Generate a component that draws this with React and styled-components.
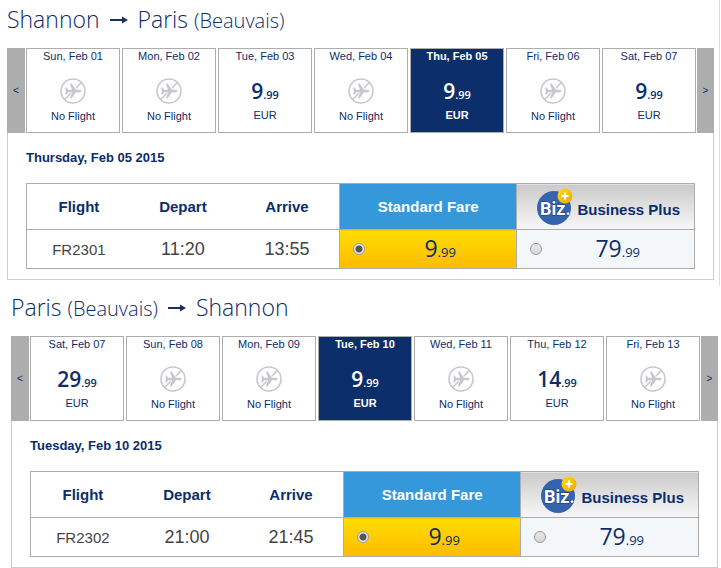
import React, { useState } from 'react';
import styled, { createGlobalStyle } from 'styled-components';

const trips = [
  {
    id: 'outbound',
    from: 'Shannon',
    to: 'Paris',
    toAirport: '(Beauvais)',
    date: 'Thursday, Feb 05 2015',
    selected: 4,
    days: [
      { label: 'Sun, Feb 01' },
      { label: 'Mon, Feb 02' },
      { label: 'Tue, Feb 03', price: '9.99' },
      { label: 'Wed, Feb 04' },
      { label: 'Thu, Feb 05', price: '9.99' },
      { label: 'Fri, Feb 06' },
      { label: 'Sat, Feb 07', price: '9.99' },
    ],
    flight: {
      number: 'FR2301',
      depart: '11:20',
      arrive: '13:55',
      standard: '9.99',
      business: '79.99',
    },
  },
  {
    id: 'inbound',
    from: 'Paris',
    fromAirport: '(Beauvais)',
    to: 'Shannon',
    date: 'Tuesday, Feb 10 2015',
    selected: 3,
    days: [
      { label: 'Sat, Feb 07', price: '29.99' },
      { label: 'Sun, Feb 08' },
      { label: 'Mon, Feb 09' },
      { label: 'Tue, Feb 10', price: '9.99' },
      { label: 'Wed, Feb 11' },
      { label: 'Thu, Feb 12', price: '14.99' },
      { label: 'Fri, Feb 13' },
    ],
    flight: {
      number: 'FR2302',
      depart: '21:00',
      arrive: '21:45',
      standard: '9.99',
      business: '79.99',
    },
  },
];

const NoFlightIcon = () => (
  <svg width='26' height='26' viewBox='0 0 26 26' aria-hidden='true'>
    <circle cx='13' cy='13' r='12' fill='none' stroke='#c6c8cd' strokeWidth='1.6' />
    <path d='M4.5 21.5 21.5 4.5' stroke='#c6c8cd' strokeWidth='1.6' />
    <path
      d='M21.5 13c0-.9-.9-1.300-2-1.300h-3.400L11.500 5.500H9.900l2.100 6.200H8.300L6.500 9.500H5.200L6.100 13l-.9 3.500h1.300l1.800-2.200H12l-2.100 6.200h1.600l4.600-6.200h3.400c1.100 0 2-.4 2-1.300z'
      fill='#c6c8cd'
      stroke='#fff'
      strokeWidth='1.4'
      paintOrder='stroke'
    />
  </svg>
);

const ArrowIcon = () => (
  <svg width='18' height='10' viewBox='0 0 18 10' aria-hidden='true'>
    <path d='M0 5h12V2.500L18 6l-6 3.500V7H0z' fill='#1b2f66' />
  </svg>
);

const BizLogo = ({ id }) => (
  <svg width='38' height='38' viewBox='0 0 38 38' role='img' aria-label='Biz plus'>
    <defs>
      <linearGradient id={id} x1='0' y1='0' x2='1' y2='1'>
        <stop offset='0' stopColor='#ffd90f' />
        <stop offset='1' stopColor='#f2a900' />
      </linearGradient>
    </defs>
    <circle cx='18' cy='20' r='17' fill='#3563ae' />
    <text
      x='4'
      y='27'
      fontFamily='Roboto, sans-serif'
      fontSize='18'
      fontWeight='700'
      fill='#fff'
      stroke='#1c3c80'
      strokeWidth='1'
      paintOrder='stroke'
    >
      Biz.
    </text>
    <circle cx='29' cy='8' r='7.5' fill={`url(#${id})`} />
    <path d='M29 4.5v7M25.5 8h7' stroke='#fff' strokeWidth='2.2' />
  </svg>
);

const Price = ({ value, large }) => {
  const [whole, cents] = value.split('.');
  return (
    <Amount $large={large}>
      {whole}
      <small>.{cents}</small>
    </Amount>
  );
};

const Trip = ({ trip }) => {
  const [selected, setSelected] = useState(trip.selected);
  const [fare, setFare] = useState('standard');
  const { flight } = trip;

  return (
    <TripSection $framed={trip.id === 'outbound'}>
      <Route>
        <span>
          {trip.from} {trip.fromAirport && <small>{trip.fromAirport}</small>}
        </span>
        <ArrowIcon />
        <span>
          {trip.to} {trip.toAirport && <small>{trip.toAirport}</small>}
        </span>
      </Route>
      <Calendar>
        <Pager aria-label='Previous days'>&lt;</Pager>
        <Days>
          {trip.days.map((day, i) => (
            <Day
              key={day.label}
              $active={i === selected}
              aria-pressed={i === selected}
              onClick={() => setSelected(i)}
            >
              <DayLabel>{day.label}</DayLabel>
              {day.price ? <Price value={day.price} /> : <NoFlightIcon />}
              <DayNote $priced={!!day.price}>
                {day.price ? 'EUR' : 'No Flight'}
              </DayNote>
            </Day>
          ))}
        </Days>
        <Pager aria-label='Next days'>&gt;</Pager>
      </Calendar>
      <Details>
        <h3>{trip.date}</h3>
        <FlightTable>
          <colgroup>
            <Col $share={47} />
            <Col $share={47} />
            <Col $share={47} />
            <Col $share={80} />
            <Col $share={80} />
          </colgroup>
          <thead>
            <tr>
              <HeadCell>Flight</HeadCell>
              <HeadCell>Depart</HeadCell>
              <HeadCell>Arrive</HeadCell>
              <HeadCell $kind='standard'>Standard Fare</HeadCell>
              <HeadCell $kind='business'>
                <BizTitle>
                  <BizLogo id={`${trip.id}-plus`} />
                  <span>Business Plus</span>
                </BizTitle>
              </HeadCell>
            </tr>
          </thead>
          <tbody>
            <tr>
              <Cell>{flight.number}</Cell>
              <Cell $time>{flight.depart}</Cell>
              <Cell $time>{flight.arrive}</Cell>
              {['standard', 'business'].map((kind) => (
                <Cell key={kind} $kind={kind}>
                  <Fare>
                    <Radio
                      type='radio'
                      name={`${trip.id}-fare`}
                      checked={fare === kind}
                      onChange={() => setFare(kind)}
                    />
                    <Price value={flight[kind]} large />
                  </Fare>
                </Cell>
              ))}
            </tr>
          </tbody>
        </FlightTable>
      </Details>
    </TripSection>
  );
};

const App = () => {
  return (
    <>
      <GlobalStyle />
      <Page>
        {trips.map((trip) => (
          <Trip key={trip.id} trip={trip} />
        ))}
      </Page>
    </>
  );
};

export default App;

const GlobalStyle = createGlobalStyle`
  * {
    box-sizing: border-box;
    margin: 0;
    padding: 0;
  }
  body {
    background: #fff;
    color: #0c2d6b;
    font-family: 'Liberation Sans', Arial, sans-serif;
  }
  button {
    font: inherit;
    color: inherit;
    cursor: pointer;
  }
`;

const Page = styled.main`
  display: flex;
  flex-direction: column;
  gap: 2px;
`;

const TripSection = styled.section`
  margin-right: ${({ $framed }) => ($framed ? '1px' : '0')};
  padding: ${({ $framed }) => ($framed ? '0 5px 6px 7px' : '0 3px 0 11px')};
  border-right: ${({ $framed }) => ($framed ? '1px solid #ddd' : 'none')};
`;

const Route = styled.h2`
  display: flex;
  align-items: center;
  gap: 10px;
  height: 48px;
  padding-bottom: 10px;
  font-family: 'Open Sans', 'Noto Sans', sans-serif;
  font-size: 23px;
  font-weight: 300;
  small {
    font-size: 20px;
  }
`;

const Calendar = styled.div`
  display: flex;
  gap: 1px;
  height: 85px;
`;

const Pager = styled.button`
  flex: 0 0 auto;
  width: 18px;
  border: none;
  background: #adadad;
  font-size: 10px;
  &:last-child {
    width: 17px;
  }
`;

const Days = styled.div`
  flex: 1;
  display: grid;
  grid-template-columns: repeat(7, 1fr);
  gap: 2px;
`;

const Day = styled.button`
  display: grid;
  grid-template-rows: 24px 36px 1fr;
  justify-items: center;
  align-items: center;
  border: 1px solid #adadad;
  background: ${({ $active }) => ($active ? '#0c2e6b' : '#fff')};
  color: ${({ $active }) => ($active ? '#fff' : 'inherit')};
  font-size: 11px;
  font-weight: ${({ $active }) => ($active ? '700' : '400')};
`;

const DayLabel = styled.span`
  align-self: start;
  line-height: 14px;
`;

const DayNote = styled.span`
  align-self: start;
  line-height: ${({ $priced }) => ($priced ? '12px' : '14px')};
`;

const Amount = styled.span`
  padding-top: ${({ $large }) => ($large ? '2px' : '0')};
  font-family: 'Open Sans', 'Noto Sans', sans-serif;
  font-size: ${({ $large }) => ($large ? '23px' : '21px')};
  font-weight: ${({ $large }) => ($large ? '400' : '600')};
  small {
    font-size: ${({ $large }) => ($large ? '13px' : '11px')};
  }
`;

const Details = styled.div`
  padding: 17px 18px 10px;
  border: 1px solid #ccc;
  border-top: none;
  h3 {
    margin-bottom: 17px;
    font-size: 13px;
    line-height: 16px;
  }
`;

const FlightTable = styled.table`
  width: 100%;
  table-layout: fixed;
  border-collapse: collapse;
  border: 1px solid #adadad;
`;

const Col = styled.col`
  width: ${({ $share }) => `calc(100% * ${$share} / 301)`};
`;

const headFill = {
  standard: '#3498db',
  business: 'linear-gradient(#cacaca, #f8f8f8)',
};

const cellFill = {
  standard: 'linear-gradient(#ffdd00, #ffbb00)',
  business: '#f4f7f9',
};

const HeadCell = styled.th`
  height: 46px;
  border-bottom: 1px solid #adadad;
  border-left: ${({ $kind }) => ($kind ? '1px solid #adadad' : 'none')};
  background: ${({ $kind }) => headFill[$kind] || '#fff'};
  color: ${({ $kind }) => ($kind === 'standard' ? '#fff' : 'inherit')};
  font-size: 15px;
`;

const BizTitle = styled.div`
  display: flex;
  align-items: center;
  justify-content: center;
  gap: 3px;
  padding-left: 5px;
  span {
    padding-top: 6px;
  }
`;

const Cell = styled.td`
  height: 39px;
  border-left: ${({ $kind }) => ($kind ? '1px solid #adadad' : 'none')};
  background: ${({ $kind }) => cellFill[$kind] || '#fff'};
  color: ${({ $kind }) => ($kind ? 'inherit' : '#444')};
  font-size: ${({ $time }) => ($time ? '18px' : '15px')};
  text-align: center;
`;

const Fare = styled.label`
  display: grid;
  grid-template-columns: 12px 1fr;
  align-items: center;
  padding: 0 1px 0 13px;
  line-height: 28px;
  cursor: pointer;
`;

const Radio = styled.input`
  appearance: none;
  width: 12px;
  height: 12px;
  border: 1px solid #999;
  border-radius: 50%;
  background: linear-gradient(#e8e8e8, #d8d8d8);
  &:checked {
    background: radial-gradient(circle, #555 0 3px, #e8e8e8 4px);
  }
`;
